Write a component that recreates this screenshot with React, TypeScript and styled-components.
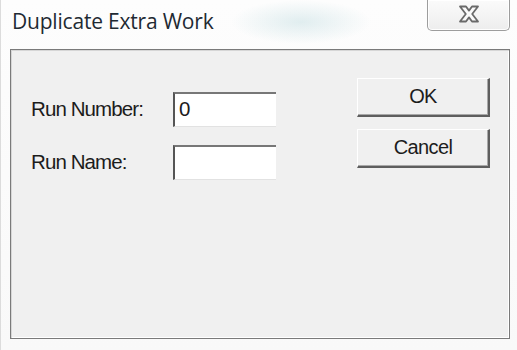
import styled, { createGlobalStyle } from "styled-components";

const GlobalStyle = createGlobalStyle`
  html, body {
    margin: 0;
    padding: 0;
    background: #ffffff;
  }
  * {
    box-sizing: border-box;
  }
`;

export default function App() {
  return (
    <>
      <GlobalStyle />
      <Window>
        <TitleBar>
          <Title>Duplicate Extra Work</Title>
          <CloseButton aria-label="Close">
            <svg width="22" height="18" viewBox="0 0 22 18">
              <path
                d="M2 1.5 H8 L11 5.6 L14 1.5 H20 L14.2 9 L20 16.5 H14 L11 12.4 L8 16.5 H2 L7.8 9 Z"
                fill="#fafafa"
                stroke="#6a6a6a"
                strokeWidth="1.8"
                strokeLinejoin="round"
              />
            </svg>
          </CloseButton>
        </TitleBar>
        <ClientArea>
          <Form>
            <Label>Run Number:</Label>
            <Field defaultValue="0" />
            <Label>Run Name:</Label>
            <Field defaultValue="" />
          </Form>
          <Buttons>
            <DialogButton>OK</DialogButton>
            <DialogButton>Cancel</DialogButton>
          </Buttons>
        </ClientArea>
      </Window>
    </>
  );
}

const Window = styled.div`
  width: 517px;
  height: 350px;
  display: flex;
  flex-direction: column;
  padding: 0 7px 11px 9px;
  background:
    radial-gradient(ellipse 70px 22px at 300px 22px, rgba(196, 222, 226, 0.5), rgba(255, 255, 255, 0) 100%),
    linear-gradient(#fdfdfd, #f9f9f9);
  border-left: 1px solid #dcdcdc;
`;

const TitleBar = styled.div`
  height: 49px;
  display: flex;
  justify-content: space-between;
  align-items: flex-start;
`;

const Title = styled.div`
  margin-top: 7px;
  margin-left: 2px;
  font-family: "Open Sans", "Liberation Sans", sans-serif;
  font-size: 21px;
  color: #1f2a33;
  letter-spacing: -0.2px;
  text-shadow: 0 0 3px rgba(255, 255, 255, 0.9);
`;

const CloseButton = styled.div`
  width: 83px;
  height: 31px;
  display: flex;
  align-items: center;
  justify-content: center;
  padding-bottom: 3px;
  border: 1px solid #9d9d9d;
  border-top: none;
  border-radius: 0 0 5px 5px;
  background: linear-gradient(#fbfbfb, #ededed);
  box-shadow: inset 0 0 0 1px rgba(255, 255, 255, 0.9);
`;

const ClientArea = styled.div`
  flex: 1;
  display: flex;
  justify-content: space-between;
  align-items: flex-start;
  padding: 28px 19px 0 20px;
  background: #f0f0f0;
  border: 1px solid #7a7a7a;
  box-shadow: inset 1px 1px 0 #d6d6d6, inset -1px -1px 0 #ffffff;
`;

const Form = styled.div`
  display: grid;
  grid-template-columns: 142px 103px;
  grid-auto-rows: 35px;
  row-gap: 18px;
  align-items: center;
  margin-top: 14px;
`;

const Label = styled.label`
  font-family: "Liberation Sans", Arial, sans-serif;
  font-size: 20.5px;
  color: #1c1c1c;
  letter-spacing: -0.9px;
  padding-bottom: 1px;
`;

const Field = styled.input`
  height: 35px;
  width: 103px;
  padding: 0 4px 2px 4px;
  font-family: "Liberation Sans", Arial, sans-serif;
  font-size: 20.5px;
  color: #1c1c1c;
  background: #ffffff;
  border: none;
  border-top: 2px solid #777777;
  border-left: 2px solid #555555;
  border-bottom: 1px solid #e2e2e2;
  outline: none;
`;

const Buttons = styled.div`
  display: flex;
  flex-direction: column;
  gap: 12px;
`;

const DialogButton = styled.div`
  width: 133px;
  height: 39px;
  display: flex;
  align-items: center;
  justify-content: center;
  padding-bottom: 2px;
  font-family: "Liberation Sans", Arial, sans-serif;
  font-size: 20px;
  color: #1c1c1c;
  letter-spacing: -0.6px;
  background: #f0f0f0;
  border-top: 1px solid #ffffff;
  border-left: 1px solid #ffffff;
  border-right: 2px solid #5e5e5e;
  border-bottom: 2px solid #5e5e5e;
  box-shadow: inset -1px -1px 0 #a8a8a8;
`;
